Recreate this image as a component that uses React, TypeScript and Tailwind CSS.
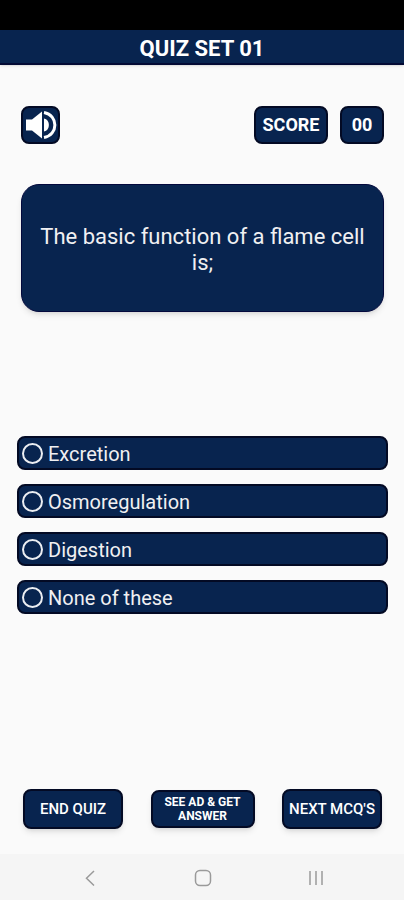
import { useState } from "react";

const options = ["Excretion", "Osmoregulation", "Digestion", "None of these"];

const box = "border-2 border-[#030a24] bg-[#08244f] text-white";

function SpeakerIcon() {
  return (
    <svg viewBox="0 0 32 30" className="h-[30px] w-8" aria-hidden="true">
      <path d="M1 9.500H7L17 1.500V28.500L7 20.500H1Z" fill="#fff" />
      <path d="M19 8.500C25.500 9.500 25.500 20.500 19 21.500Z" fill="#fff" />
      <path d="M19 2.500C33.500 5 33.500 25 19 27.500" fill="none" stroke="#fff" strokeWidth="3" />
    </svg>
  );
}

export default function App() {
  const [selected, setSelected] = useState<string | null>(null);

  return (
    <div className="flex min-h-screen flex-col bg-[#fafafa] font-['Roboto',sans-serif] text-white">
      <div className="h-[30px] bg-black" />
      <header className="flex h-[35px] items-center justify-center border-b-2 border-[#030a34] bg-[#08244f] pt-1 shadow-sm">
        <h1 className="text-[22px] leading-[26px] font-bold">QUIZ SET 01</h1>
      </header>

      <main className="flex grow flex-col pl-px">
        <div className="mx-5 mt-[41px] flex items-center">
          <button
            type="button"
            aria-label="Toggle sound"
            className={`flex h-[38px] w-[39px] items-center justify-center rounded-lg ${box}`}
          >
            <SpeakerIcon />
          </button>
          <div className={`ml-auto flex h-[38px] w-[74px] items-center justify-center rounded-lg text-lg font-bold ${box}`}>
            SCORE
          </div>
          <div className={`ml-3 flex h-[38px] w-11 items-center justify-center rounded-lg text-lg font-bold ${box}`}>
            00
          </div>
        </div>

        <section className="mx-5 mt-10 flex min-h-32 items-center justify-center rounded-[18px] border border-[#03083c] bg-[#08244f] px-4 pt-1 shadow-md">
          <h2 className="text-center text-[22px] leading-[26px] text-[#f0f0f2]">
            The basic function of a flame cell is;
          </h2>
        </section>

        <fieldset aria-label="Answers" className="mx-4 mt-[124px] flex flex-col gap-[14px]">
          {options.map((option) => (
            <label
              key={option}
              className={`flex h-[34px] items-center gap-[5px] rounded-lg px-[3px] text-xl ${box}`}
            >
              <input
                type="radio"
                name="answer"
                value={option}
                checked={selected === option}
                onChange={() => setSelected(option)}
                className="size-[21px] shrink-0 appearance-none rounded-full border-2 border-[#eceef2] checked:border-[6px]"
              />
              <span className="pt-0.5 text-[#f0f0f2]">{option}</span>
            </label>
          ))}
        </fieldset>

        <div className="mx-[22px] mt-auto flex items-center justify-between pt-10 pb-[25px]">
          <button type="button" className={`h-10 w-[100px] rounded-lg text-[15px] font-medium shadow-md ${box}`}>
            END QUIZ
          </button>
          <button type="button" className={`h-[38px] w-[104px] rounded-lg px-2 text-xs leading-[14px] font-bold shadow-md ${box}`}>
            SEE AD &amp; GET ANSWER
          </button>
          <button type="button" className={`h-10 w-[100px] rounded-lg text-[15px] font-medium whitespace-nowrap shadow-md ${box}`}>
            NEXT MCQ'S
          </button>
        </div>
      </main>

      <nav className="flex h-[46px] items-center justify-center gap-24 bg-[#f5f5f5] pt-0.5 pl-0.5 text-[#9a9a9a]">
        <button type="button" aria-label="Back">
          <svg viewBox="0 0 16 18" className="h-[18px] w-4" fill="none" stroke="currentColor" strokeWidth="1.500">
            <path d="M12 2L4.500 9.250L12 16.500" />
          </svg>
        </button>
        <button type="button" aria-label="Home">
          <svg viewBox="0 0 18 18" className="size-[18px]" fill="none" stroke="currentColor" strokeWidth="1.500">
            <rect x="1.500" y="1.500" width="15" height="15" rx="4.500" />
          </svg>
        </button>
        <button type="button" aria-label="Recent apps">
          <svg viewBox="0 0 16 18" className="h-[18px] w-4" fill="none" stroke="currentColor" strokeWidth="1.500">
            <path d="M2 2V16M8 2V16M14 2V16" />
          </svg>
        </button>
      </nav>
    </div>
  );
}
